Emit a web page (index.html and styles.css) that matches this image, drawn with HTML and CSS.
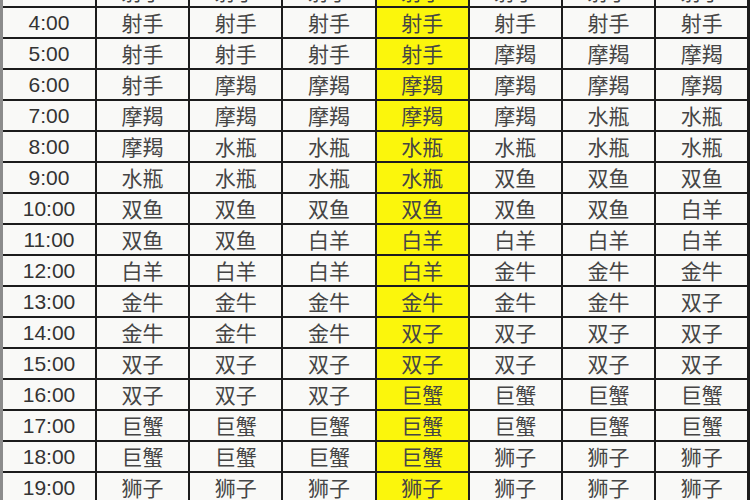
FILE: index.html
```html
<!DOCTYPE html>
<html lang="zh">
<head>
<meta charset="utf-8">
<link rel="stylesheet" href="styles.css">
</head>
<body>
<div class="page">
<div class="grid" id="grid"></div>
</div>
<script>
const rows = [
["3:00","射手","射手","射手","射手","射手","射手","射手"],
["4:00","射手","射手","射手","射手","射手","射手","射手"],
["5:00","射手","射手","射手","射手","摩羯","摩羯","摩羯"],
["6:00","射手","摩羯","摩羯","摩羯","摩羯","摩羯","摩羯"],
["7:00","摩羯","摩羯","摩羯","摩羯","摩羯","水瓶","水瓶"],
["8:00","摩羯","水瓶","水瓶","水瓶","水瓶","水瓶","水瓶"],
["9:00","水瓶","水瓶","水瓶","水瓶","双鱼","双鱼","双鱼"],
["10:00","双鱼","双鱼","双鱼","双鱼","双鱼","双鱼","白羊"],
["11:00","双鱼","双鱼","白羊","白羊","白羊","白羊","白羊"],
["12:00","白羊","白羊","白羊","白羊","金牛","金牛","金牛"],
["13:00","金牛","金牛","金牛","金牛","金牛","金牛","双子"],
["14:00","金牛","金牛","金牛","双子","双子","双子","双子"],
["15:00","双子","双子","双子","双子","双子","双子","双子"],
["16:00","双子","双子","双子","巨蟹","巨蟹","巨蟹","巨蟹"],
["17:00","巨蟹","巨蟹","巨蟹","巨蟹","巨蟹","巨蟹","巨蟹"],
["18:00","巨蟹","巨蟹","巨蟹","巨蟹","狮子","狮子","狮子"],
["19:00","狮子","狮子","狮子","狮子","狮子","狮子","狮子"]
];
const g = document.getElementById('grid');
rows.forEach(r => {
  r.forEach((t, i) => {
    const d = document.createElement('div');
    d.className = 'cell' + (i === 0 ? ' time' : '') + (i === 4 ? ' hl' : '');
    d.textContent = t;
    g.appendChild(d);
  });
});
</script>
</body>
</html>
```
FILE: styles.css
```css
html, body {
  margin: 0;
  padding: 0;
  width: 750px;
  height: 500px;
  overflow: hidden;
  background: #f9f9f7;
}
.page {
  border-left: 3px solid #8c8c8c;
  height: 500px;
  box-sizing: border-box;
  overflow: hidden;
}
.grid {
  margin-top: -23px;
  display: grid;
  grid-template-columns: 92px repeat(7, 91.2px);
  grid-auto-rows: 29px;
  gap: 2px;
  background: #1c1c1c;
  width: 760px;
}
.cell {
  background: #f9f9f7;
  display: flex;
  align-items: center;
  justify-content: center;
  font-family: "Noto Sans CJK SC", "Liberation Sans", sans-serif;
  font-size: 21px;
  color: #454545;
  line-height: 1;
}
.cell.time {
  font-family: "Liberation Sans", "Noto Sans CJK SC", sans-serif;
  font-size: 21px;
  color: #333;
}
.cell.hl {
  background: #fbf60c;
}
```
